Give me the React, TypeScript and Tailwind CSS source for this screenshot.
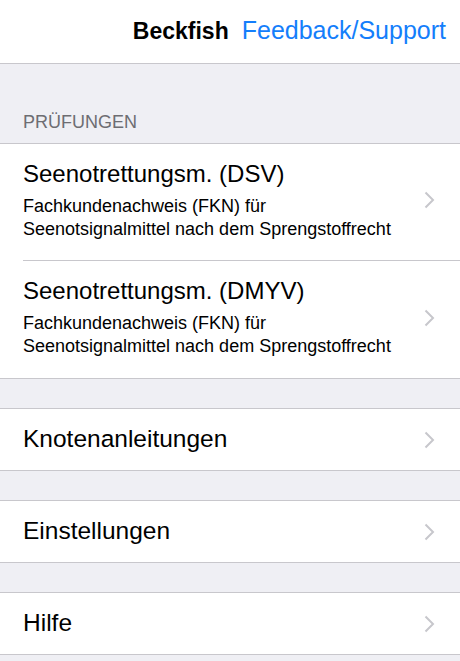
import React from 'react'

const font = { fontFamily: '"Liberation Sans", Arial, sans-serif' }

function Chevron() {
  return (
    <svg width="11" height="18" viewBox="0 0 11 18" className="shrink-0">
      <path d="M1.5 1.5 L9 9 L1.5 16.5" fill="none" stroke="#c7c7cc" strokeWidth="2" />
    </svg>
  )
}

function ExamRow({ title, last }: { title: string; last?: boolean }) {
  return (
    <div className="flex items-center bg-white pl-[23px]">
      <div className={`flex flex-1 items-center pr-[25px] h-[117px] pb-[4px] ${last ? '' : 'border-b border-[#c8c7cc]'}`}>
        <div className="flex-1">
          <div className="text-[24px] leading-[28px] text-black">{title}</div>
          <div className="mt-[7px] text-[18px] leading-[23px] text-black">
            Fachkundenachweis (FKN) für
            <br />
            Seenotsignalmittel nach dem Sprengstoffrecht
          </div>
        </div>
        <Chevron />
      </div>
    </div>
  )
}

function SimpleRow({ title }: { title: string }) {
  return (
    <div className="flex h-[63px] items-center justify-between border-y border-[#c8c7cc] bg-white pl-[23px] pr-[25px]">
      <span className="text-[24.5px] text-black">{title}</span>
      <Chevron />
    </div>
  )
}

export default function App() {
  return (
    <div className="min-h-[661px] w-[460px] bg-[#efeff4]" style={font}>
      <header className="flex h-[64px] items-center justify-end gap-[13px] border-b border-[#c8c7cc] bg-white pr-[14px] pb-[1px]">
        <span className="text-[23px] font-bold text-black">Beckfish</span>
        <span className="text-[25px] text-[#147efb]">Feedback/Support</span>
      </header>

      <div className="px-[23px] pt-[48px] pb-[11px] text-[18px] leading-[20px] text-[#6d6d72]">PRÜFUNGEN</div>
      <div className="border-y border-[#c8c7cc]">
        <ExamRow title="Seenotrettungsm. (DSV)" />
        <ExamRow title="Seenotrettungsm. (DMYV)" last />
      </div>

      <div className="h-[29px]" />
      <SimpleRow title="Knotenanleitungen" />
      <div className="h-[29px]" />
      <SimpleRow title="Einstellungen" />
      <div className="h-[29px]" />
      <SimpleRow title="Hilfe" />
      <div className="h-[29px]" />
    </div>
  )
}
